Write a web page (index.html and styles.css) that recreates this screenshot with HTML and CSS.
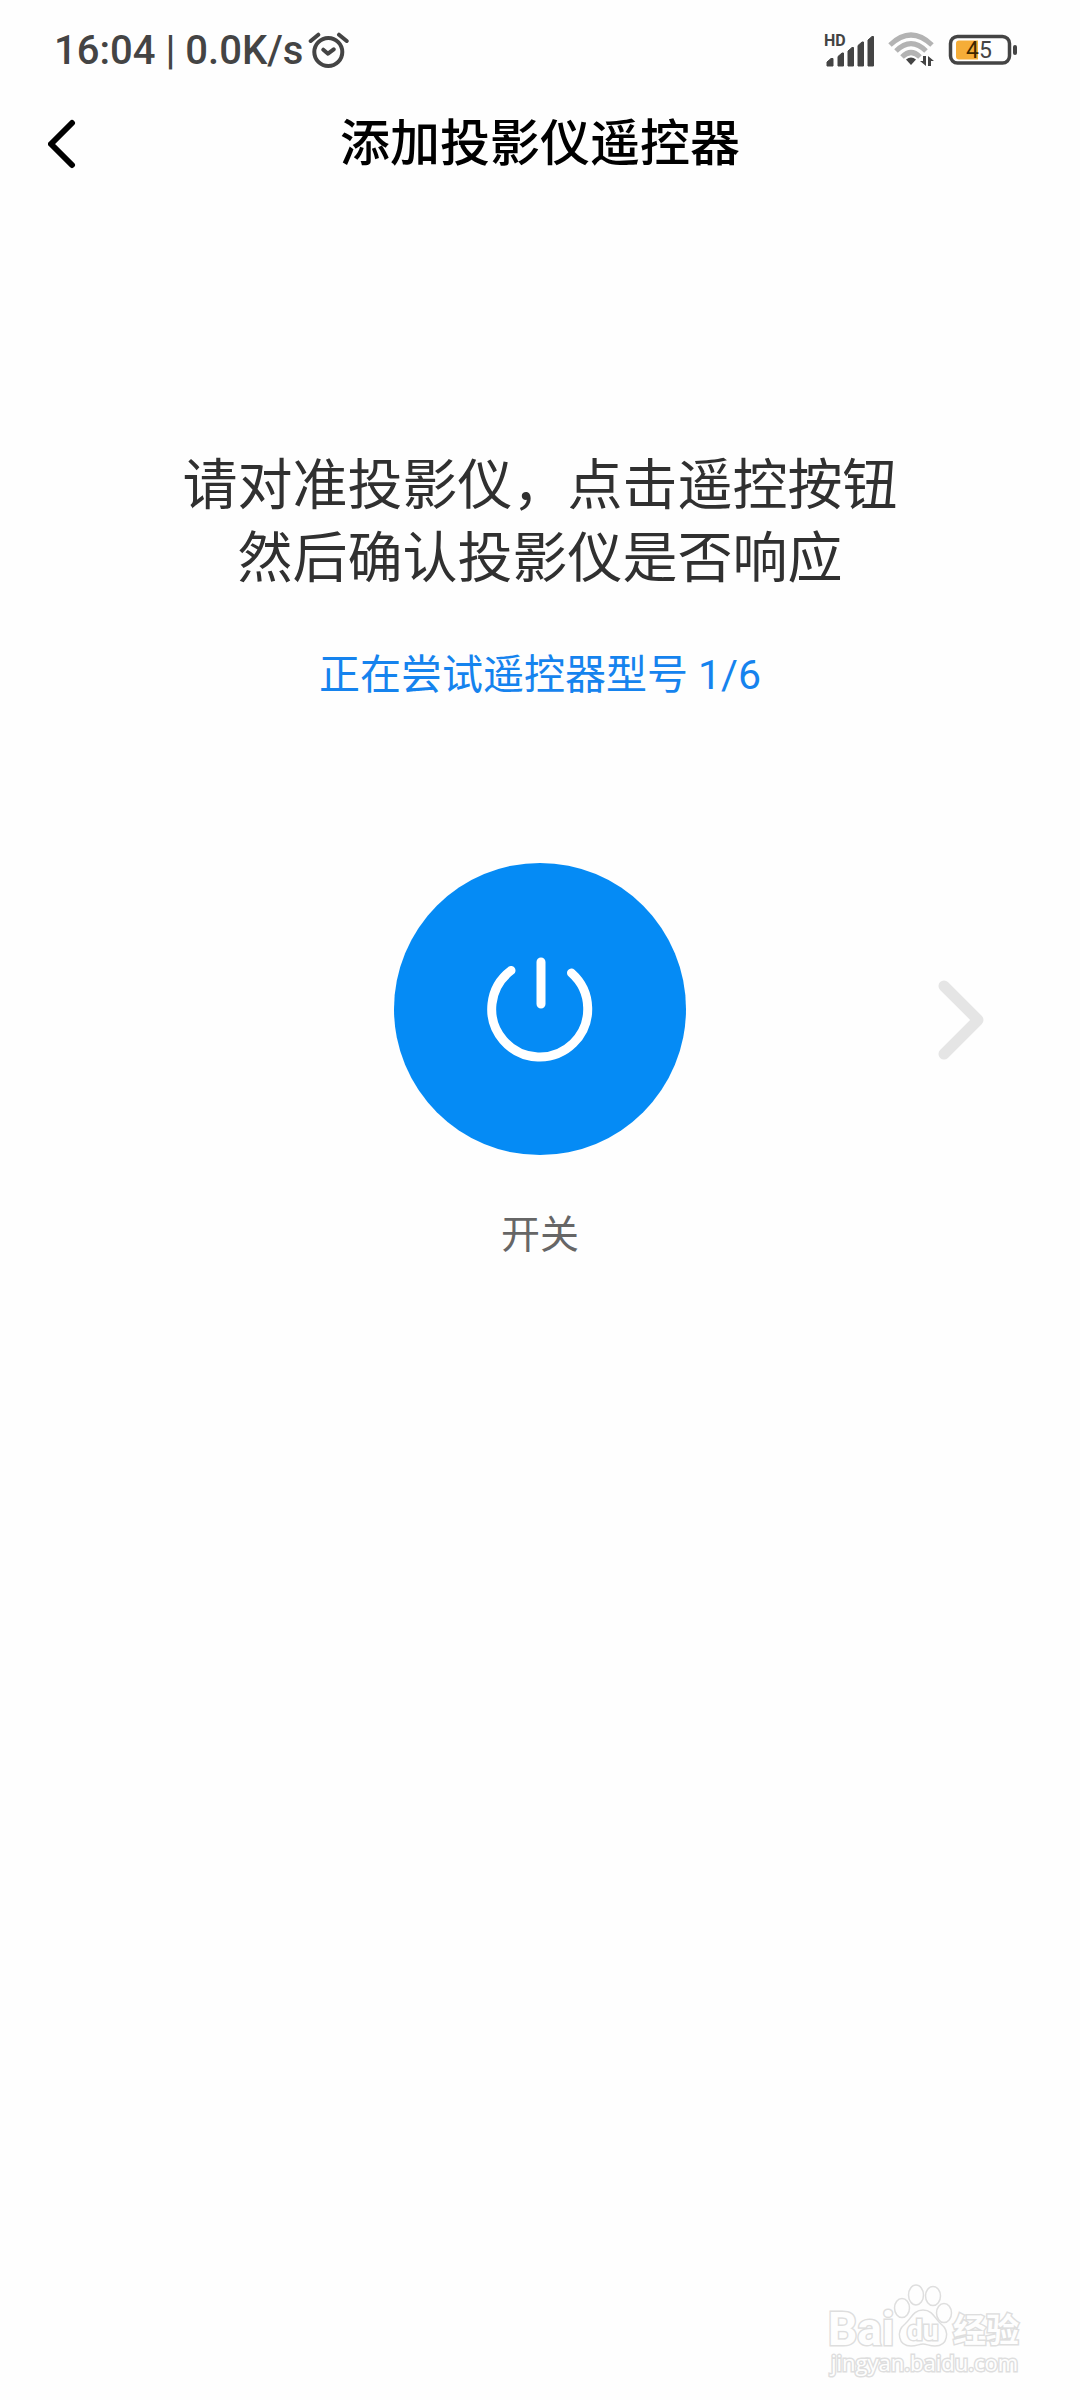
FILE: index.html
```html
<!DOCTYPE html>
<html lang="zh-CN">
  <head>
    <meta charset="utf-8">
    <meta name="viewport" content="width=device-width, initial-scale=1">
    <title>添加投影仪遥控器</title>
    <link rel="stylesheet" href="styles.css">
  </head>
  <body>
    <div class="status">
      <span class="time">16:04 | 0.0K/s</span>
      <svg class="alarm" width="41" height="38" viewBox="0 0 41 38">
        <circle cx="20.3" cy="21" r="14"/>
        <path d="M2.7 10L10.3 3.7M31 3.7L38.7 10M15.3 18.7L20 22.7L25.7 18.3"/>
      </svg>
      <div class="indicators">
        <svg width="52" height="38" viewBox="0 -2 52 38">
          <text class="hd" x="0" y="13">HD</text>
          <path class="bar" d="M3 29L7 25.500H9V33H3ZM14 23.500L18 20H19.500V33H14ZM24 18L28 14.500H29.500V33H24ZM34 12.500L38 9H39.500V33H34ZM44 7L48 3.500H49.500V33H44Z"/>
        </svg>
        <svg width="48" height="38" viewBox="0 0 48 38">
          <path class="wave" d="M2 14Q23 -6 44 14M8 20Q23 5 38 20M14 26Q23 17 32 26"/>
          <path class="solid" d="M18 28.500Q23 24.500 28 28.500L23 34Z"/>
          <path class="solid" d="M35 25H38V35L32 30H35ZM40 35V25L46 30H43V35Z"/>
        </svg>
        <svg class="battery" width="70" height="32" viewBox="0 0 70 32">
          <rect class="case" x="2.500" y="2.500" width="59" height="26.500" rx="7"/>
          <rect class="nub" x="65" y="11" width="4" height="10" rx="2"/>
          <path class="charge" d="M11 6.500H30V25.500H11Q8 25.500 8 22.500V9.500Q8 6.500 11 6.500Z"/>
          <text x="18" y="24"><tspan class="over">4</tspan>5</text>
        </svg>
      </div>
    </div>
    <header>
      <button class="back" aria-label="返回">
        <svg width="30" height="50" viewBox="0 0 30 50">
          <path d="M24 4L3 25L24 46"/>
        </svg>
      </button>
      <h1>添加投影仪遥控器</h1>
    </header>
    <main>
      <p class="guide">请对准投影仪，点击遥控按钮<br>然后确认投影仪是否响应</p>
      <p class="trying">正在尝试遥控器型号 1/6</p>
      <div class="remote">
        <div class="key">
          <button class="power" id="power" aria-labelledby="power-label">
            <svg width="110" height="110" viewBox="0 0 110 110">
              <path d="M26 16.500A48 48 0 1 0 86.500 19M56 8V50"/>
            </svg>
          </button>
          <label id="power-label" for="power">开关</label>
        </div>
        <button class="next" aria-label="下一个">
          <svg width="46" height="80" viewBox="0 0 46 80">
            <path d="M6 6L40 40L6 74"/>
          </svg>
        </button>
      </div>
    </main>
    <footer>
      <svg width="200" height="100" viewBox="0 0 200 100">
        <text class="logo" x="4" y="61">Bai</text>
        <g class="paw">
          <ellipse cx="78" cy="24" rx="7.500" ry="9.500"/>
          <ellipse cx="92" cy="11" rx="7.500" ry="10"/>
          <ellipse cx="109" cy="12" rx="7.500" ry="9.500"/>
          <ellipse cx="120" cy="29" rx="7.500" ry="9.500"/>
          <path d="M99 26C89 26 87 35 81 40C72 47 74 62 87 62C93 62 95 60 99 60S105 62 111 62C124 62 126 47 117 40C111 35 109 26 99 26Z"/>
        </g>
        <text class="du" x="83" y="56">du</text>
        <text class="jingyan" x="129" y="58">经验</text>
        <text class="site" x="7" y="87">jingyan.baidu.com</text>
      </svg>
    </footer>
  </body>
</html>
```

FILE: styles.css
```css
* {
  box-sizing: border-box;
}
body {
  margin: 0;
  min-height: 100vh;
  display: flex;
  flex-direction: column;
  background: #fefefe;
  color: #303030;
  font-family: Roboto, "Noto Sans CJK SC", sans-serif;
}
svg {
  display: block;
}
button {
  padding: 0;
  border: 0;
  background: none;
  cursor: pointer;
}
h1, p {
  margin: 0;
}
.status {
  display: flex;
  align-items: center;
  height: 100px;
  padding: 0 62px 0 54px;
  color: #444;
}
.time {
  margin-right: 5px;
  font-size: 40px;
  font-weight: 500;
}
.alarm {
  fill: none;
  stroke: #444;
  stroke-width: 4;
  stroke-linecap: round;
  stroke-linejoin: round;
}
.indicators {
  display: flex;
  align-items: center;
  gap: 12px;
  margin-left: auto;
  fill: #444;
}
.hd {
  font-size: 16px;
  font-weight: 700;
}
.bar {
  stroke: #444;
  stroke-width: 1;
  stroke-linejoin: round;
}
.wave {
  fill: none;
  stroke: #b3b3b3;
  stroke-width: 5;
}
.battery {
  font-size: 23px;
}
.case {
  fill: none;
  stroke: #444;
  stroke-width: 3.5;
}
.charge {
  fill: #f5ad38;
}
.over {
  fill: #3d2800;
}
header {
  display: grid;
  grid-template-columns: 1fr auto 1fr;
  align-items: center;
  height: 88px;
  padding: 0 48px;
}
.back {
  justify-self: start;
}
.back path {
  fill: none;
  stroke: #000;
  stroke-width: 6;
  stroke-linecap: round;
  stroke-linejoin: round;
}
h1 {
  color: #000;
  font-size: 50px;
  font-weight: 500;
  line-height: 72px;
}
main {
  padding-top: 261px;
  text-align: center;
}
.guide {
  font-size: 55px;
  line-height: 73px;
}
.trying {
  margin-top: 50px;
  color: #1583ee;
  font-size: 41px;
  line-height: 60px;
}
.remote {
  display: grid;
  grid-template-columns: 1fr auto 1fr;
  align-items: start;
  margin-top: 158px;
}
.key {
  grid-column: 2;
  display: flex;
  flex-direction: column;
  align-items: center;
  gap: 50px;
}
.power {
  display: grid;
  place-items: center;
  width: 292px;
  height: 292px;
  border-radius: 50%;
  background: #058bf5;
}
.power path {
  fill: none;
  stroke: #fff;
  stroke-width: 9;
  stroke-linecap: round;
}
.key label {
  color: #666;
  font-size: 39px;
  line-height: 60px;
}
.next {
  justify-self: end;
  padding: 117px 96px;
}
.next path {
  fill: none;
  stroke: #e5e5e5;
  stroke-width: 11;
  stroke-linecap: round;
  stroke-linejoin: round;
}
footer {
  margin-top: auto;
  align-self: flex-end;
  padding: 0 56px 16px 0;
}
footer svg {
  overflow: visible;
  fill: #fefefe;
  stroke: #dedede;
  stroke-width: 1.5;
}
footer text {
  stroke-width: 3;
  paint-order: stroke;
}
.logo {
  font-size: 46px;
  font-weight: 700;
}
.du {
  font-size: 28px;
  font-weight: 700;
}
.jingyan {
  font-size: 33px;
  font-weight: 700;
}
.site {
  font-family: "Open Sans", sans-serif;
  font-size: 22px;
}
```
